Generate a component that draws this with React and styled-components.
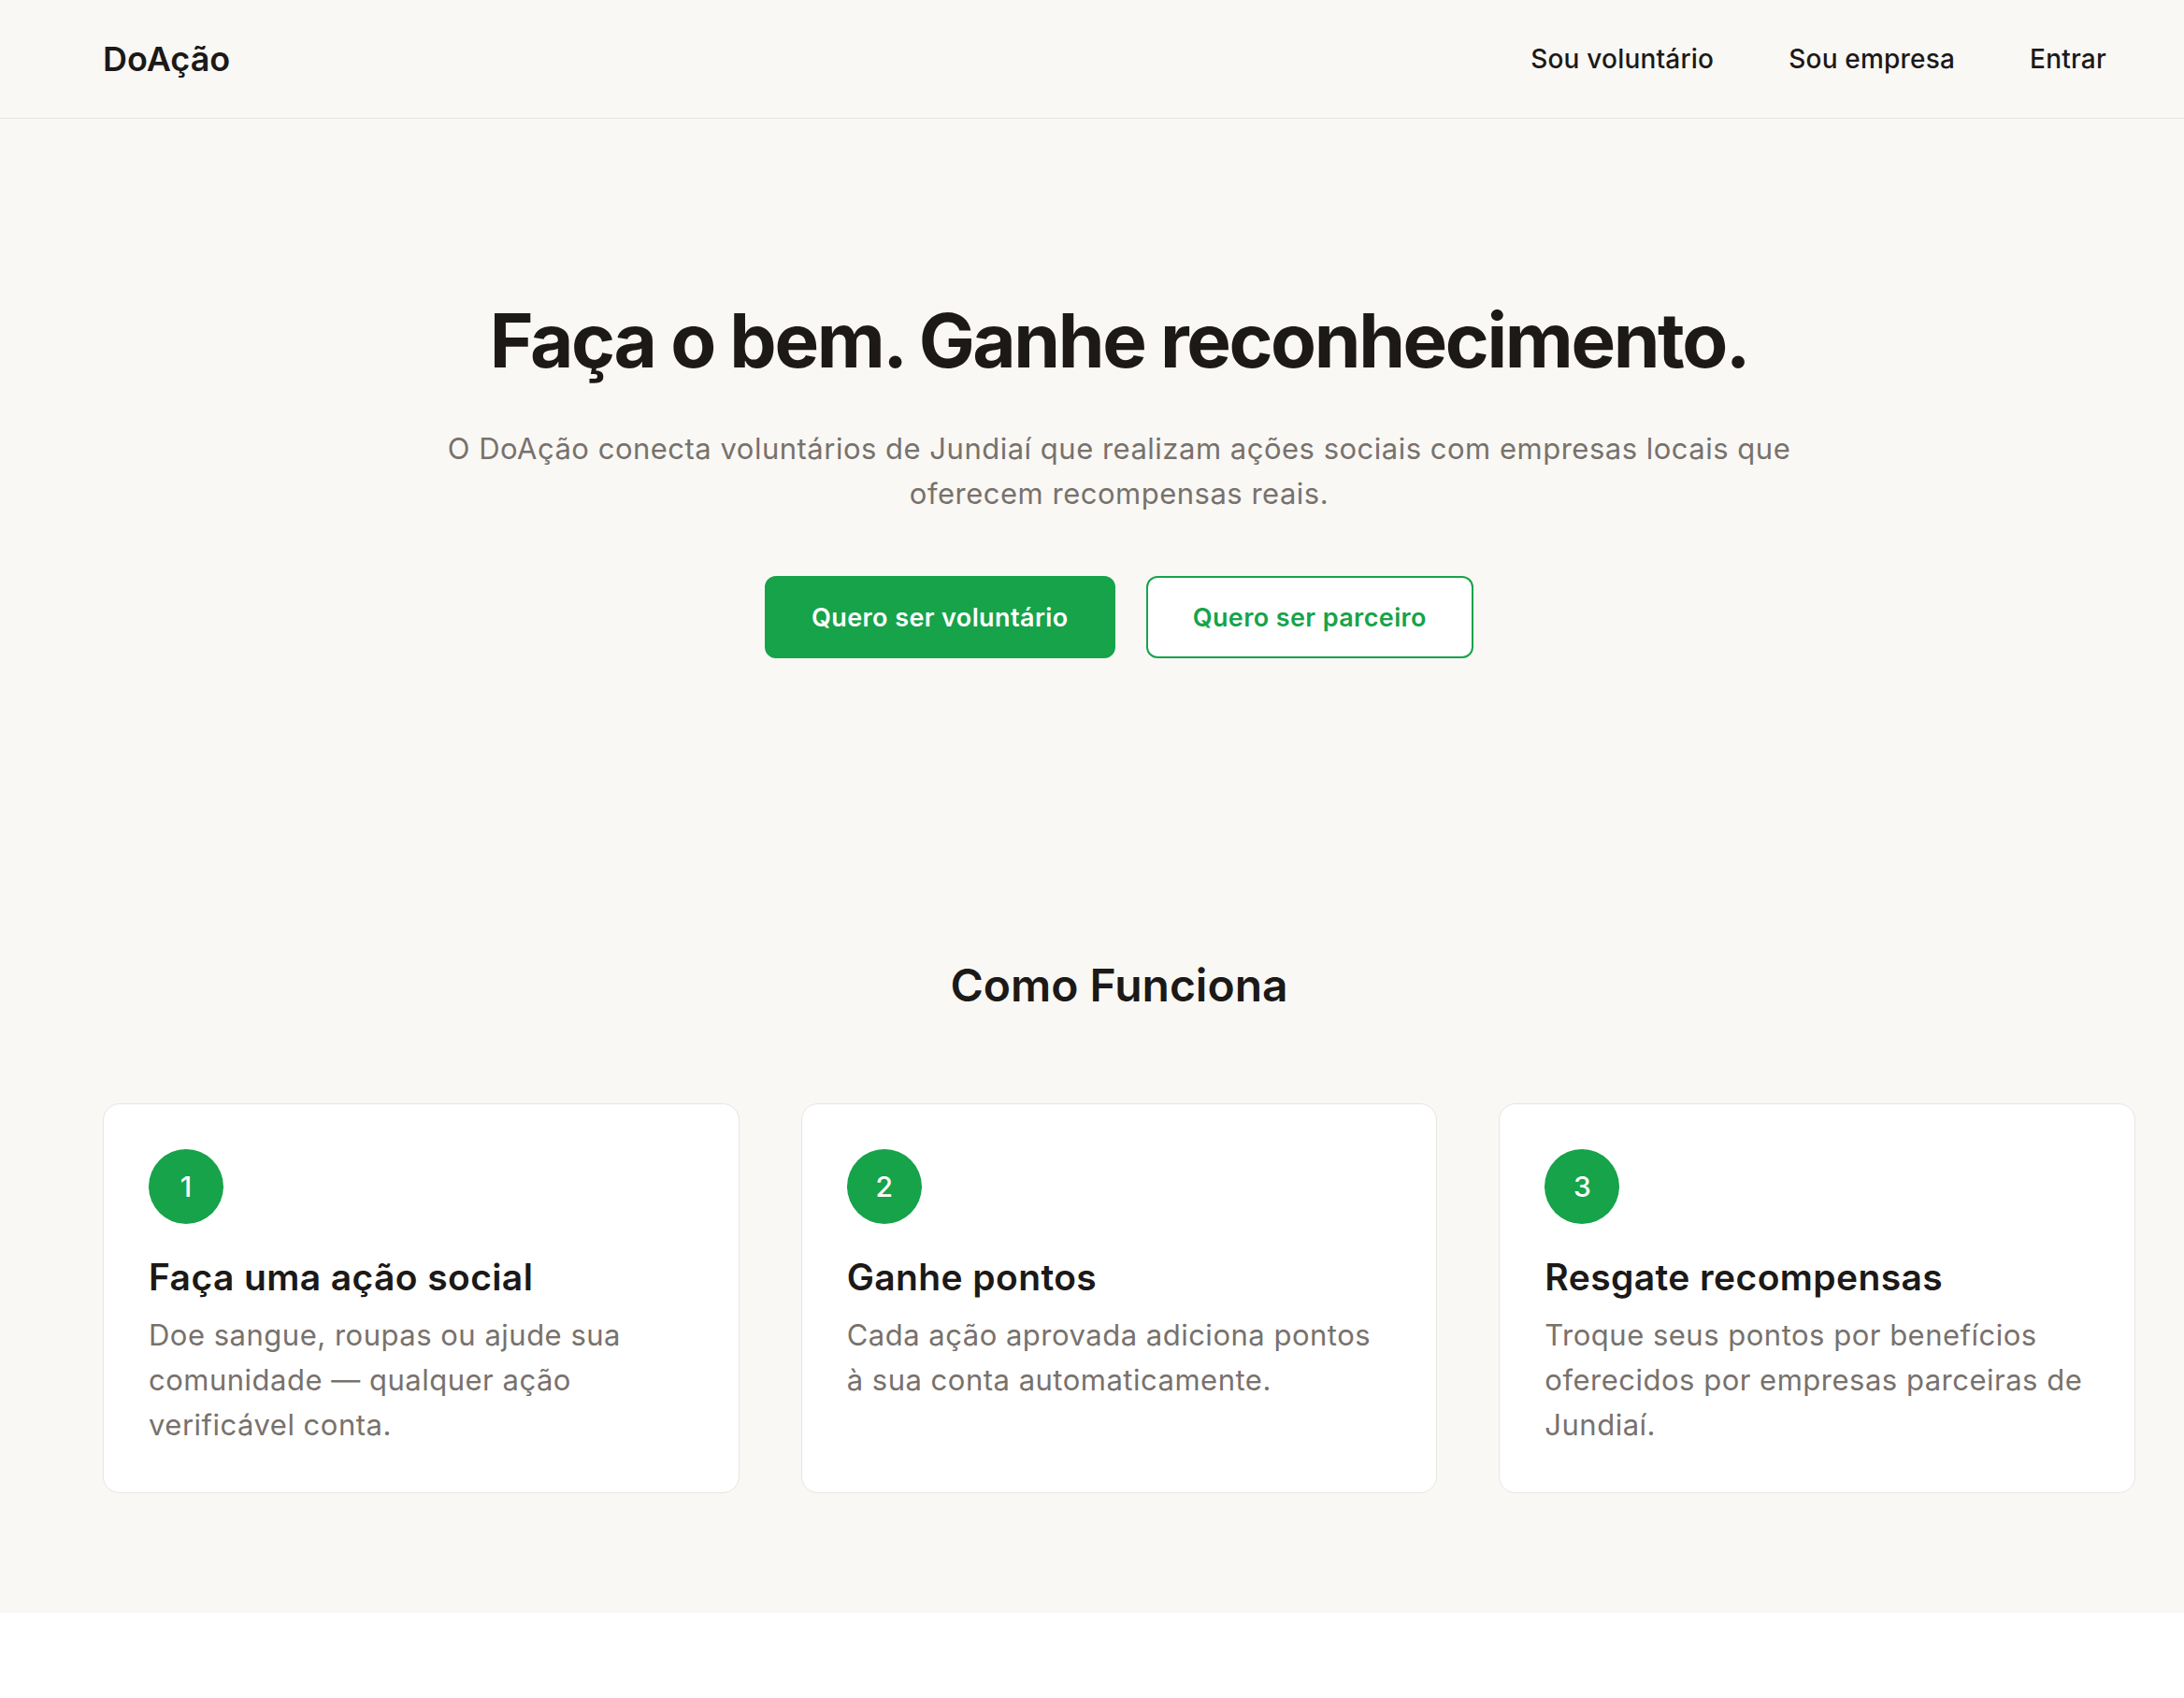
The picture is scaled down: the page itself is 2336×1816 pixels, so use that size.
import React from "react";
import styled, { createGlobalStyle } from "styled-components";

const GlobalStyle = createGlobalStyle`
  * { box-sizing: border-box; }
  html, body { margin: 0; padding: 0; background: #ffffff; }
  body {
    font-family: Inter, "Noto Sans", "Liberation Sans", sans-serif;
    color: #1c1917;
    -webkit-font-smoothing: antialiased;
  }
`;

const Page = styled.div`
  background: #f9f8f5;
`;

const Header = styled.header`
  height: 127px;
  display: flex;
  align-items: center;
  justify-content: space-between;
  padding: 0 83px 0 110px;
  border-bottom: 1px solid #e7e5e2;
`;

const Logo = styled.a`
  font-size: 36px;
  font-weight: 600;
  color: #1c1917;
  text-decoration: none;
`;

const Nav = styled.nav`
  display: flex;
  align-items: center;
  gap: 80px;
`;

const NavLink = styled.a`
  font-size: 28px;
  font-weight: 500;
  letter-spacing: 0.2px;
  color: #1c1917;
  text-decoration: none;
`;

const Hero = styled.section`
  display: flex;
  flex-direction: column;
  align-items: center;
  text-align: center;
  padding: 193px 52px 160px 110px;
`;

const Title = styled.h1`
  margin: 0;
  font-size: 80px;
  line-height: 1.1;
  font-weight: 700;
  letter-spacing: -0.03em;
  color: #1c1917;
`;

const Lead = styled.p`
  margin: 48px 0 0;
  max-width: 1480px;
  font-size: 31px;
  line-height: 48px;
  letter-spacing: 0.5px;
  color: #78716c;
`;

const Actions = styled.div`
  display: flex;
  gap: 33px;
  margin-top: 64px;
`;

const Button = styled.a`
  display: inline-flex;
  align-items: center;
  justify-content: center;
  height: 88px;
  padding: 0 48px;
  border-radius: 12px;
  font-size: 27px;
  font-weight: 600;
  letter-spacing: 0.4px;
  text-decoration: none;
  border: 2px solid #16a34a;
  background: ${(p) => (p.$outline ? "#ffffff" : "#16a34a")};
  color: ${(p) => (p.$outline ? "#16a34a" : "#ffffff")};
`;

const Steps = styled.section`
  padding: 160px 52px 128px 110px;
`;

const SectionTitle = styled.h2`
  margin: 0 0 96px;
  text-align: center;
  font-size: 48px;
  line-height: 60px;
  font-weight: 600;
  color: #1c1917;
`;

const Grid = styled.div`
  display: grid;
  grid-template-columns: repeat(3, 1fr);
  gap: 66px;
`;

const Card = styled.article`
  background: #ffffff;
  border: 1px solid #e7e5e2;
  border-radius: 18px;
  padding: 48px;
`;

const Badge = styled.div`
  width: 80px;
  height: 80px;
  border-radius: 50%;
  background: #16a34a;
  color: #ffffff;
  display: flex;
  align-items: center;
  justify-content: center;
  font-size: 30px;
  font-weight: 500;
`;

const CardTitle = styled.h3`
  margin: 33px 0 0;
  font-size: 39px;
  line-height: 47px;
  font-weight: 600;
  letter-spacing: 0.4px;
  color: #1c1917;
`;

const CardText = styled.p`
  margin: 15px 0 0;
  font-size: 31px;
  line-height: 48px;
  letter-spacing: 0.5px;
  color: #78716c;
`;

const steps = [
  {
    n: 1,
    title: "Faça uma ação social",
    text: "Doe sangue, roupas ou ajude sua comunidade — qualquer ação verificável conta.",
  },
  {
    n: 2,
    title: "Ganhe pontos",
    text: "Cada ação aprovada adiciona pontos à sua conta automaticamente.",
  },
  {
    n: 3,
    title: "Resgate recompensas",
    text: "Troque seus pontos por benefícios oferecidos por empresas parceiras de Jundiaí.",
  },
];

export default function App() {
  return (
    <>
      <GlobalStyle />
      <Page>
        <Header>
          <Logo href="#">DoAção</Logo>
          <Nav>
            <NavLink href="#">Sou voluntário</NavLink>
            <NavLink href="#">Sou empresa</NavLink>
            <NavLink href="#">Entrar</NavLink>
          </Nav>
        </Header>
        <Hero>
          <Title>Faça o bem. Ganhe reconhecimento.</Title>
          <Lead>
            O DoAção conecta voluntários de Jundiaí que realizam ações sociais com empresas locais que
            oferecem recompensas reais.
          </Lead>
          <Actions>
            <Button href="#">Quero ser voluntário</Button>
            <Button href="#" $outline>Quero ser parceiro</Button>
          </Actions>
        </Hero>
        <Steps>
          <SectionTitle>Como Funciona</SectionTitle>
          <Grid>
            {steps.map((s) => (
              <Card key={s.n}>
                <Badge>{s.n}</Badge>
                <CardTitle>{s.title}</CardTitle>
                <CardText>{s.text}</CardText>
              </Card>
            ))}
          </Grid>
        </Steps>
      </Page>
    </>
  );
}
